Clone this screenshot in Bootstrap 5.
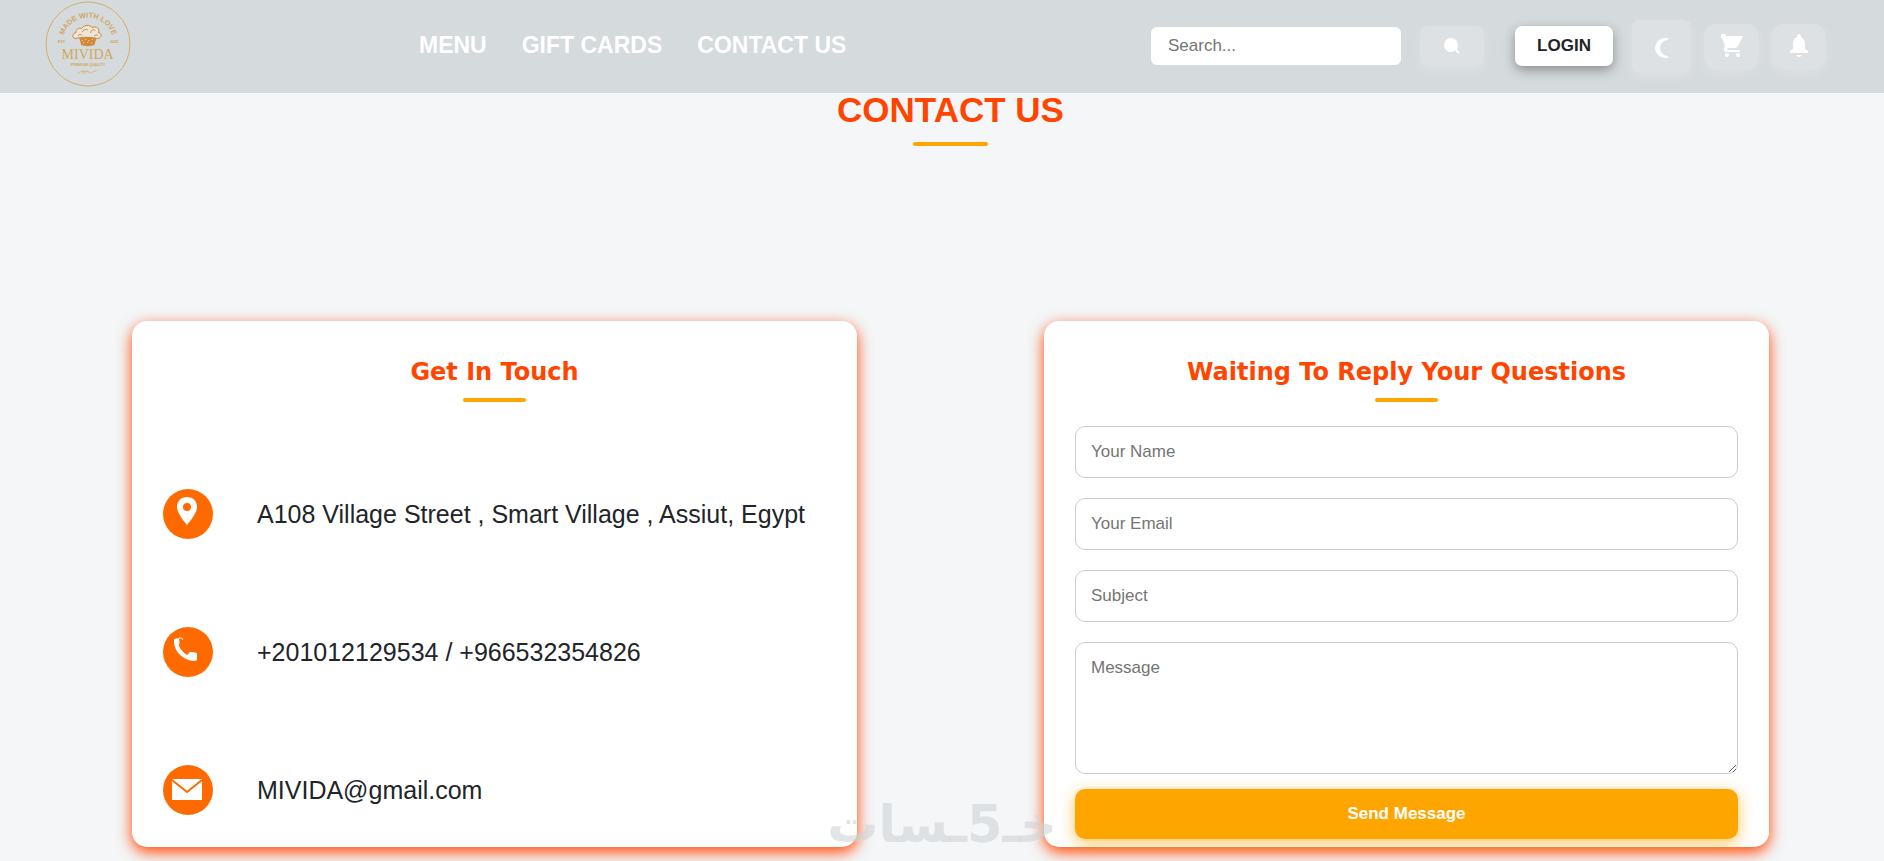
<!DOCTYPE html>
<html lang="en">
<head>
<meta charset="utf-8">
<meta name="viewport" content="width=device-width, initial-scale=1">
<title>MIVIDA - Contact Us</title>
<link href="https://cdn.jsdelivr.net/npm/bootstrap@5.3.0/dist/css/bootstrap.min.css" rel="stylesheet">
<style>
  body { background: #f4f6f8; color: #212529; font-family: "Liberation Sans", Arial, sans-serif; }
  .site-bar { background: #d5dadc; min-height: 93px; padding: 0 58px 0 45px; }
  .brand-logo { display: block; width: 86px; height: 86px; }
  .brand-link { margin-bottom: 6px; }
  .main-links { gap: 35px; margin-left: 288px; padding-bottom: 4px; }
  .main-links a { color: #fff; font-size: 23px; font-weight: 700; line-height: 28px; text-decoration: none; }
  .search-box { width: 250px; height: 38px; border: 0; border-radius: 6px; padding: 0 17px; font-size: 17px; color: #212529; }
  .search-box::placeholder { color: #757575; opacity: 1; }
  .tools { gap: 12px; padding-bottom: 1px; }
  .soft-btn { display: flex; align-items: center; justify-content: center; width: 55px; height: 45px; padding: 0; border: 0; border-radius: 12px; color: #fff;
    background: rgba(255,255,255,.2); box-shadow: 0 4px 12px rgba(255,255,255,.2); }
  .soft-btn.find { width: 64px; height: 40px; margin: 0 19px 0 7px; border-radius: 7px; }
  .soft-btn.theme { width: 59px; height: 53px; margin: 0 1px 0 7px; padding: 4px 0 0; border-radius: 7px; }
  .login-btn { width: 98px; height: 40px; border: 0; border-radius: 7px; background: #fff; color: #212529; font-size: 17px; font-weight: 700; line-height: 24px; padding: 0;
    box-shadow: 0 4px 12px rgba(0,0,0,.35); }
  .page-body { padding: 0 115px 32px 132px; }
  .page-title { color: #ff4500; font-size: 35px; font-weight: 700; line-height: 34px; margin: 0; }
  .rule-bar { height: 4px; border-radius: 2px; background: orange; }
  .page-rule { width: 75px; margin: 15px auto 175px; }
  .card-rule { width: 63px; margin: 6px auto 0; }
  .panels { display: grid; grid-template-columns: 1fr 1fr; gap: 187px; }
  .panel { background: #fff; border-radius: 15px; padding: 32px 31px 7px; box-shadow: 0 5px 15px #ff4500; }
  .panel-title { font-family: "DejaVu Sans", sans-serif; font-weight: 700; font-size: 24px; line-height: 39px; color: #ff4500; margin: 0; }
  .contact-list { gap: 88px; margin: 87px 0 25px; padding: 0; list-style: none; font-size: 25px; line-height: 38px; }
  .contact-list li { display: flex; align-items: center; gap: 44px; }
  .contact-list a { color: inherit; text-decoration: none; }
  .round-icon { flex: none; width: 50px; height: 50px; border-radius: 50%; background: #ff6a00; }
  .contact-form { display: flex; flex-direction: column; gap: 20px; margin-top: 24px; }
  .field { display: block; width: 100%; height: 52px; border: 1px solid #ccc; border-radius: 10px; padding: 0 15px; font-size: 17px; background: #fff; }
  .field::placeholder { color: #757575; opacity: 1; }
  textarea.field { height: 132px; padding: 13px 15px; line-height: 24px; }
  .send-btn { height: 50px; margin-top: -5px; border: 0; border-radius: 10px; background: orange; color: #fff; font-size: 17px; font-weight: 700; line-height: 24px; box-shadow: 0 4px 15px rgba(255,165,0,.65); }
  .site-mark { position: fixed; left: 50%; bottom: 0; transform: translateX(-50%); color: rgba(205,211,214,.6); font: 700 51px/72px "DejaVu Sans", sans-serif; white-space: nowrap; pointer-events: none; }
  @media (max-width: 1300px) {
    .panels { grid-template-columns: 1fr; gap: 40px; }
    .page-body { padding: 0 24px 32px; }
    .site-bar { flex-wrap: wrap; }
    .main-links { margin-left: 24px; }
    .page-rule { margin-bottom: 60px; }
  }
</style>
</head>
<body>
<header class="site-bar d-flex align-items-center">
  <a class="brand-link" href="#" aria-label="MIVIDA home">
    <svg class="brand-logo" viewBox="0 0 258 258" fill="#d2a660">
      <defs><path id="arc" d="M52 127a77 77 0 0 1 154 0"/></defs>
      <circle cx="129" cy="129" r="126" fill="none" stroke="#d2b06c" stroke-width="3"/>
      <g font-family="Liberation Sans, sans-serif" font-weight="700">
        <text font-size="22"><textPath href="#arc" startOffset="50%" text-anchor="middle">MADE WITH LOVE</textPath></text>
        <text x="50" y="126" font-size="11" text-anchor="middle">EST.</text>
        <text x="208" y="126" font-size="11" text-anchor="middle">2025</text>
        <text x="129" y="195" font-size="11" text-anchor="middle">PREMIUM QUALITY</text>
      </g>
      <text x="128" y="174" font-family="Liberation Serif, serif" font-size="42" text-anchor="middle">MIVIDA</text>
      <path d="M90 113c-11-5-7-17 3-18-1-11 9-16 17-12 5-12 26-13 31-3 13-7 25 4 19 15 13 2 10 15-2 18-20-5-48-6-68 0z" fill="#efe6d6" stroke="#c58b45" stroke-width="3"/>
      <path d="M112 93c3-8 12-10 17-5M137 96c-1-8 8-13 14-7M99 104c5-5 9-4 13-1M147 106c4-5 8-5 11-3" fill="none" stroke="#c58b45" stroke-width="3"/>
      <path d="M103 112q25-6 51 0l-6 21q-20 5-39 0z" fill="#d38636"/>
      <path d="M110 118h4m6-2h4m6 3h4m6-3h4m-30 9h4m8-1h4m8 2h4" stroke="#f3d39b" stroke-width="3"/>
      <path d="M98 217c12-7 18-8 21-6-6 5-8 7-4 7 8-1 12-10 16-8-3 8 4 8 10 4 5-3 9-3 14-5M108 211h20" fill="none" stroke="#d2b06c" stroke-width="2"/>
    </svg>
  </a>
  <nav class="main-links d-flex" aria-label="Main">
    <a href="#">MENU</a><a href="#">GIFT CARDS</a><a href="#">CONTACT US</a>
  </nav>
  <div class="tools d-flex align-items-center ms-auto">
    <input class="search-box" type="search" placeholder="Search..." aria-label="Search">
    <button class="soft-btn find" type="button" aria-label="Search"><svg width="16" height="16" viewBox="0 0 16 16"><circle cx="7" cy="7" r="7" fill="#fff"/><path d="m10 10 5 5" stroke="#fff" stroke-width="2"/></svg></button>
    <button class="login-btn" type="button">LOGIN</button>
    <button class="soft-btn theme" type="button" aria-label="Dark mode"><svg width="16" height="20" viewBox="0 0 16 20"><path d="M14 0v2a8 8 0 0 0 0 16v2h-3a10 10 0 0 1 0-20z" fill="#fff"/></svg></button>
    <button class="soft-btn" type="button" aria-label="Cart"><svg width="22" height="24" viewBox="0 0 22 24" fill="#fff"><path d="M0 0h4l1 2h17l-5 10q-1 2-3 2H7l-1 2h13v2H5q-3-1-2-4l1-2L1 4H0z"/><circle cx="6" cy="21" r="2"/><circle cx="17" cy="21" r="2"/></svg></button>
    <button class="soft-btn" type="button" aria-label="Notifications"><svg width="18" height="24" viewBox="0 0 18 24" fill="#fff"><path d="M9 0q2 0 2 3 4 2 4 7v5l3 2v2H0v-2l3-2v-5q0-5 4-7 0-3 2-3zM6 21h6q-3 4-6 0z"/></svg></button>
  </div>
</header>

<main class="page-body">
  <h1 class="page-title text-center">CONTACT US</h1>
  <div class="rule-bar page-rule"></div>
  <div class="panels">
    <section class="panel">
      <h2 class="panel-title text-center">Get In Touch</h2>
      <div class="rule-bar card-rule"></div>
      <ul class="contact-list d-flex flex-column">
        <li><svg class="round-icon" viewBox="0 0 50 50"><path fill="#fff" fill-rule="evenodd" d="M24 8c-6 0-10 4-10 10 0 5 5 12 10 18 5-6 10-13 10-18 0-6-4-10-10-10zm0 6a4 4 0 1 1 0 8 4 4 0 0 1 0-8z"/></svg><span>A108 Village Street , Smart Village , Assiut, Egypt</span></li>
        <li><svg class="round-icon" viewBox="0 0 50 50"><path fill="#fff" d="M11 12l5-1q1 4 0 8 3 6 8 9l3-3q4 0 7 1v7q-1 1-4 1C17 32 10 22 11 12z"/><path d="M16 11q3-1 4 2" fill="none" stroke="#fff"/></svg><span>+201012129534 / +966532354826</span></li>
        <li><svg class="round-icon" viewBox="0 0 50 50"><path fill="#fff" d="M9 14h30v21H9z"/><path d="m9 15 15 12 15-12" fill="none" stroke="#ff6a00" stroke-width="2"/></svg><a href="mailto:MIVIDA@gmail.com">MIVIDA@gmail.com</a></li>
      </ul>
    </section>
    <section class="panel">
      <h2 class="panel-title text-center">Waiting To Reply Your Questions</h2>
      <div class="rule-bar card-rule"></div>
      <form class="contact-form">
        <input class="field" type="text" placeholder="Your Name" aria-label="Your Name">
        <input class="field" type="email" placeholder="Your Email" aria-label="Your Email">
        <input class="field" type="text" placeholder="Subject" aria-label="Subject">
        <textarea class="field" placeholder="Message" aria-label="Message"></textarea>
        <button class="send-btn" type="submit">Send Message</button>
      </form>
    </section>
  </div>
</main>
<div class="site-mark" dir="rtl" lang="ar">خـ5ـسات</div>
<script src="https://cdn.jsdelivr.net/npm/bootstrap@5.3.0/dist/js/bootstrap.bundle.min.js"></script>
</body>
</html>
